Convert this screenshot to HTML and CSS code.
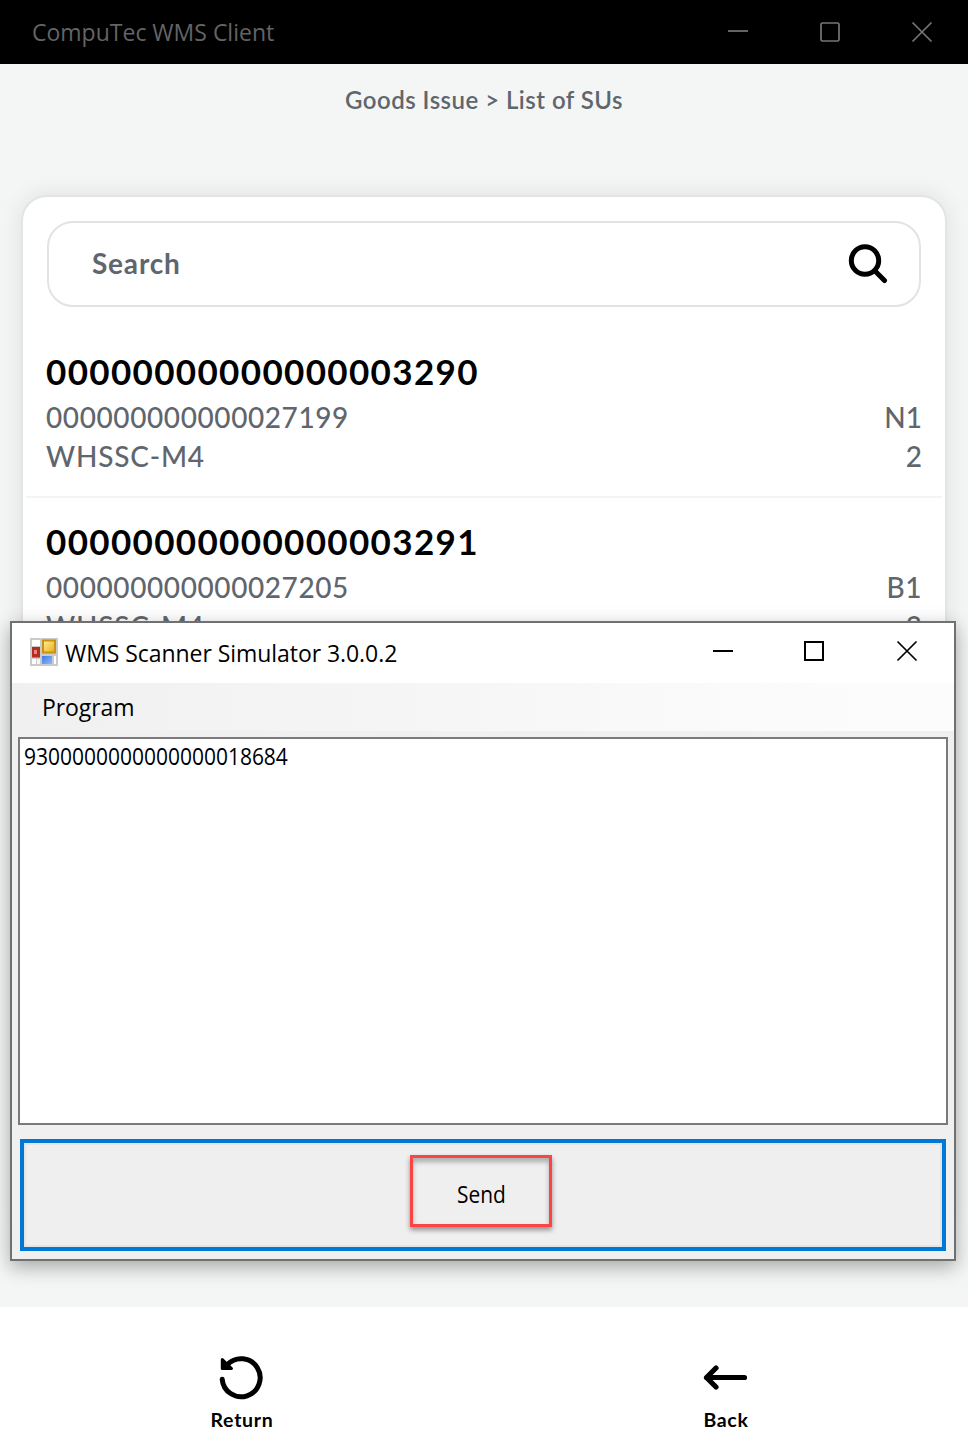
FILE: index.html
```
<!DOCTYPE html>
<html lang="en">
<head>
<meta charset="utf-8">
<title>CompuTec WMS Client</title>
<link rel="stylesheet" href="styles.css">
</head>
<body>
<div class="app">
  <header class="titlebar">
    <span class="titlebar-name">CompuTec WMS Client</span>
    <svg class="titlebar-controls" width="206" height="24" viewBox="0 0 206 24" fill="none" stroke="#767676" stroke-width="1.7">
      <path d="M0 11h20"/>
      <rect x="93" y="3" width="18" height="18" rx="1.5"/>
      <path d="M184.500 2.500l19 19M203.500 2.500l-19 19"/>
    </svg>
  </header>
  <main class="content">
    <h1 class="breadcrumb">Goods Issue &gt; List of SUs</h1>
    <section class="card">
      <div class="search">
        <span class="search-label">Search</span>
        <svg width="40" height="42" viewBox="0 0 40 42" fill="none" stroke="#000" stroke-width="5" stroke-linecap="round">
          <circle cx="17" cy="17.500" r="13.700"/>
          <path d="M27 28l9.500 9.500"/>
        </svg>
      </div>
      <ul class="list">
        <li class="item">
          <div class="item-title">00000000000000003290</div>
          <div class="item-line"><span class="num">000000000000027199</span><span>N1</span></div>
          <div class="item-line"><span class="code">WHSSC-M4</span><span>2</span></div>
        </li>
        <li class="item">
          <div class="item-title">00000000000000003291</div>
          <div class="item-line"><span class="num">000000000000027205</span><span class="bin">B1</span></div>
          <div class="item-line"><span class="code">WHSSC-M4</span><span>2</span></div>
        </li>
      </ul>
    </section>
  </main>
  <footer class="footer">
    <div class="action">
      <svg width="46" height="46" viewBox="0 0 46 46">
        <path d="M3.200 25.200A19 19 0 1 0 8.500 10.500" fill="none" stroke="#000" stroke-width="5" stroke-linecap="round"/>
        <path d="M3.300 5.500L12.500 14.500H3.300Z" stroke="#000" stroke-width="3" stroke-linejoin="round"/>
      </svg>
      <span class="action-label">Return</span>
    </div>
    <div class="action">
      <svg width="46" height="46" viewBox="0 0 46 46" fill="none" stroke="#000" stroke-width="5.2" stroke-linecap="round" stroke-linejoin="round">
        <path d="M13 14L3.500 23.500l9.500 9.500M3.500 23.500h38"/>
      </svg>
      <span class="action-label">Back</span>
    </div>
  </footer>
</div>

<div class="window">
  <div class="window-bar">
    <svg class="window-icon" width="28" height="28" viewBox="0 0 28 28">
      <defs>
        <linearGradient id="gold" x2="1" y2="1"><stop stop-color="#fff0a0"/><stop offset="1" stop-color="#e8ac10"/></linearGradient>
        <linearGradient id="blue" x2="1" y2="1"><stop stop-color="#4079dc"/><stop offset="1" stop-color="#8cbcff"/></linearGradient>
      </defs>
      <rect width="28" height="28" fill="#cbcbcb"/>
      <rect x="2" y="2" width="8" height="6" fill="#fff"/>
      <rect x="2" y="21" width="4" height="5" fill="#fff"/><rect x="7" y="21" width="3" height="5" fill="#f4f4f4"/>
      <rect x="24" y="18" width="2" height="8" fill="#fff"/>
      <rect x="2" y="9" width="8" height="10.500" fill="#b52c22"/>
      <rect x="4" y="12" width="3" height="4" fill="#ea8577"/>
      <rect x="13" y="2.500" width="12" height="12" fill="url(#gold)" stroke="#c8920f" stroke-width="2"/>
      <rect x="12" y="18" width="10" height="8" fill="url(#blue)"/>
    </svg>
    <span class="window-name">WMS Scanner Simulator 3.0.0.2</span>
    <svg class="window-controls" width="206" height="24" viewBox="0 0 206 24" fill="none" stroke="#000" stroke-width="2">
      <path d="M0 12h20"/>
      <rect x="92" y="3" width="18" height="18"/>
      <path stroke-width="1.700" d="M184.500 2.500l19 19M203.500 2.500l-19 19"/>
    </svg>
  </div>
  <div class="menubar"><span class="menu-item">Program</span></div>
  <div class="textarea"><span class="scan">9300000000000000018684</span></div>
  <div class="send-button"><div class="highlight"><span class="send-label">Send</span></div></div>
</div>
</body>
</html>
```
FILE: styles.css
```
* { box-sizing: border-box; }
body { margin: 0; font-family: Lato, sans-serif; }
svg { display: block; flex: none; }
.app { position: relative; display: flex; flex-direction: column; height: 1447px; overflow: hidden; background: #f4f6f6; }
.titlebar { display: flex; flex: none; align-items: center; justify-content: space-between; height: 64px; padding: 0 34px 0 32px; background: #000; color: #646464; }
.titlebar-name { margin-top: -1px; font: 23px/32px "Open Sans", sans-serif; white-space: nowrap; }
.content { flex: 1; min-height: 0; padding: 16px 21px 80px; display: flex; flex-direction: column; }
.breadcrumb { flex: none; margin: 0 0 75px; font-size: 24px; line-height: 40px; font-weight: 600; letter-spacing: .470px; text-align: center; color: #5f666d; }
.card { flex: 1; min-height: 0; overflow: hidden; padding: 24px 3px 0; border: 2px solid #e3e4e4; border-radius: 26px; background: #fff; box-shadow: 0 0 24px rgba(0, 0, 0, .09); }
.search { display: flex; align-items: center; justify-content: space-between; height: 86px; margin: 0 21px; padding: 0 31px 0 43px; border: 2px solid #e3e3e3; border-radius: 26px; }
.search-label { margin-top: -2px; font-size: 28px; font-weight: 700; letter-spacing: .800px; color: #5f666d; }
.list { margin: 21px 0 0; padding: 0; list-style: none; }
.item { height: 170px; padding: 19px 20px 0; border-bottom: 2px solid #f3f4f4; }
.item-title { margin-bottom: 3px; font-size: 35px; line-height: 48px; font-weight: 700; letter-spacing: 1.340px; }
.item-line { display: flex; justify-content: space-between; font-size: 28px; line-height: 39px; font-weight: 500; color: #5f666d; }
.num { letter-spacing: .590px; }
.code { letter-spacing: .800px; }
.bin { letter-spacing: .500px; }
.footer { display: flex; flex: none; height: 140px; background: #fff; }
.action { flex: 1; display: flex; flex-direction: column; align-items: center; padding-top: 47px; }
.action-label { margin-top: 7px; font-size: 19.500px; line-height: 26px; font-weight: 700; letter-spacing: .700px; }

/* Simulator window floating above the client */
.window { position: absolute; left: 10px; top: 621px; width: 946px; height: 640px; display: flex; flex-direction: column; border: 2px solid #707070; background: #f0f0f0; box-shadow: 0 6px 18px rgba(0, 0, 0, .32); font-family: "Open Sans", sans-serif; color: #000; }
.window-bar { display: flex; flex: none; align-items: center; height: 60px; padding: 0 35px 0 18px; background: #fff; }
.window-icon { margin-top: -2px; }
.window-name { margin-left: 7px; font-size: 23px; line-height: 32px; letter-spacing: -.060px; white-space: nowrap; }
.window-controls { margin: -4px 0 0 auto; }
.menubar { flex: none; height: 48px; padding-left: 30px; background: linear-gradient(90deg, #f0f0f0, #fcfcfc 90%); line-height: 48px; }
.menu-item { font-size: 23px; letter-spacing: -.100px; }
.textarea { flex: none; height: 388px; margin: 6px 6px 0; padding: 0 4px; border: 2px solid #7a7a7a; background: #fff; }
.scan { display: inline-block; font-size: 24px; line-height: 34px; transform: scaleX(.874); transform-origin: 0 50%; }
.send-button { display: flex; flex: none; align-items: center; justify-content: center; height: 112px; margin: 14px 8px 0; border: 4px solid #0078d7; background: #efefef; box-shadow: inset 0 0 0 2px #e4e4e4; }
.highlight { display: flex; align-items: center; justify-content: center; width: 142px; height: 72px; margin: -8px 4px 0 0; border: 3px solid #fb4444; box-shadow: 0 3px 5px rgba(0, 0, 0, .4), inset 0 4px 5px rgba(0, 0, 0, .28); }
.send-label { margin-top: 5px; font-size: 23.500px; line-height: 30px; transform: scaleX(.89); }
```
